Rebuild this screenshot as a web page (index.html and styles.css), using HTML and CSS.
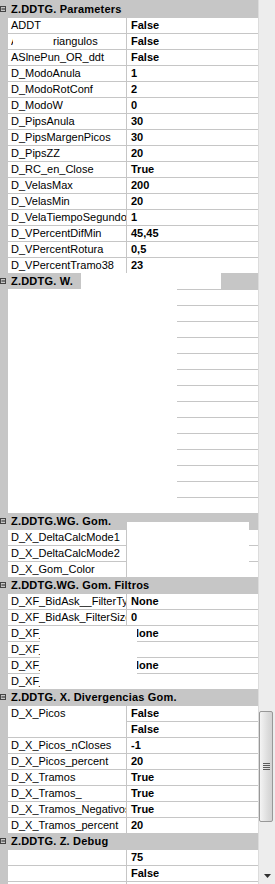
FILE: index.html
```html
<!DOCTYPE html>
<html>
<head>
<meta charset="utf-8">
<link rel="stylesheet" href="styles.css">
</head>
<body>
<div class="app">
  <div class="grid">
    <section class="sec">
      <div class="cat"><span class="tog"><svg width="8" height="16" viewBox="0 0 8 16"><rect x="0.5" y="5.5" width="5" height="5" fill="none" stroke="#444"/><line x1="1.5" y1="8" x2="5" y2="8" stroke="#222"/></svg></span><span class="ctext">Z.DDTG. Parameters</span></div>
      <div class="row"><span class="gut"></span><span class="name">ADDT</span><span class="val">False</span></div>
      <div class="row"><span class="gut"></span><span class="name"><span class="frag">A</span><span class="gap"></span>riangulos</span><span class="val">False</span></div>
      <div class="row"><span class="gut"></span><span class="name">ASlnePun_OR_ddt</span><span class="val">False</span></div>
      <div class="row"><span class="gut"></span><span class="name">D_ModoAnula</span><span class="val">1</span></div>
      <div class="row"><span class="gut"></span><span class="name">D_ModoRotConf</span><span class="val">2</span></div>
      <div class="row"><span class="gut"></span><span class="name">D_ModoW</span><span class="val">0</span></div>
      <div class="row"><span class="gut"></span><span class="name">D_PipsAnula</span><span class="val">30</span></div>
      <div class="row"><span class="gut"></span><span class="name">D_PipsMargenPicos</span><span class="val">30</span></div>
      <div class="row"><span class="gut"></span><span class="name">D_PipsZZ</span><span class="val">20</span></div>
      <div class="row"><span class="gut"></span><span class="name">D_RC_en_Close</span><span class="val">True</span></div>
      <div class="row"><span class="gut"></span><span class="name">D_VelasMax</span><span class="val">200</span></div>
      <div class="row"><span class="gut"></span><span class="name">D_VelasMin</span><span class="val">20</span></div>
      <div class="row"><span class="gut"></span><span class="name">D_VelaTiempoSegundos</span><span class="val">1</span></div>
      <div class="row"><span class="gut"></span><span class="name">D_VPercentDifMin</span><span class="val">45,45</span></div>
      <div class="row"><span class="gut"></span><span class="name">D_VPercentRotura</span><span class="val">0,5</span></div>
      <div class="row"><span class="gut"></span><span class="name">D_VPercentTramo38</span><span class="val">23</span></div>
    </section>

    <section class="sec">
      <div class="cat"><span class="tog"><svg width="8" height="16" viewBox="0 0 8 16"><rect x="0.5" y="5.5" width="5" height="5" fill="none" stroke="#444"/><line x1="1.5" y1="8" x2="5" y2="8" stroke="#222"/></svg></span><span class="ctext">Z.DDTG. W.</span></div>
      <div class="row"><span class="gut"></span><span class="name"></span><span class="val"></span></div>
      <div class="row"><span class="gut"></span><span class="name"></span><span class="val"></span></div>
      <div class="row"><span class="gut"></span><span class="name"></span><span class="val"></span></div>
      <div class="row"><span class="gut"></span><span class="name"></span><span class="val"></span></div>
      <div class="row"><span class="gut"></span><span class="name"></span><span class="val"></span></div>
      <div class="row"><span class="gut"></span><span class="name"></span><span class="val"></span></div>
      <div class="row"><span class="gut"></span><span class="name"></span><span class="val"></span></div>
      <div class="row"><span class="gut"></span><span class="name"></span><span class="val"></span></div>
      <div class="row"><span class="gut"></span><span class="name"></span><span class="val"></span></div>
      <div class="row"><span class="gut"></span><span class="name"></span><span class="val"></span></div>
      <div class="row"><span class="gut"></span><span class="name"></span><span class="val"></span></div>
      <div class="row"><span class="gut"></span><span class="name"></span><span class="val"></span></div>
      <div class="row"><span class="gut"></span><span class="name"></span><span class="val"></span></div>
      <div class="row"><span class="gut"></span><span class="name"></span><span class="val"></span></div>
      <div class="mask m-w-head"></div>
      <div class="mask m-w-body"></div>
    </section>

    <section class="sec">
      <div class="cat"><span class="tog"><svg width="8" height="16" viewBox="0 0 8 16"><rect x="0.5" y="5.5" width="5" height="5" fill="none" stroke="#444"/><line x1="1.5" y1="8" x2="5" y2="8" stroke="#222"/></svg></span><span class="ctext">Z.DDTG.WG. Gom.</span></div>
      <div class="row"><span class="gut"></span><span class="name">D_X_DeltaCalcMode1</span><span class="val"></span></div>
      <div class="row"><span class="gut"></span><span class="name">D_X_DeltaCalcMode2</span><span class="val"></span></div>
      <div class="row"><span class="gut"></span><span class="name">D_X_Gom_Color</span><span class="val"></span></div>
      <div class="mask m-gom"></div>
    </section>

    <section class="sec">
      <div class="cat"><span class="tog"><svg width="8" height="16" viewBox="0 0 8 16"><rect x="0.5" y="5.5" width="5" height="5" fill="none" stroke="#444"/><line x1="1.5" y1="8" x2="5" y2="8" stroke="#222"/></svg></span><span class="ctext">Z.DDTG.WG. Gom. Filtros</span></div>
      <div class="row"><span class="gut"></span><span class="name">D_XF_BidAsk__FilterType</span><span class="val">None</span></div>
      <div class="row"><span class="gut"></span><span class="name">D_XF_BidAsk_FilterSize</span><span class="val">0</span></div>
      <div class="row"><span class="gut"></span><span class="name">D_XF_Delta_FilterType</span><span class="val">None</span></div>
      <div class="row"><span class="gut"></span><span class="name">D_XF_Delta_FilterSize</span><span class="val"></span></div>
      <div class="row"><span class="gut"></span><span class="name">D_XF_Volume_FilterType</span><span class="val">None</span></div>
      <div class="row"><span class="gut"></span><span class="name">D_XF_Volume_FilterSize</span><span class="val"></span></div>
      <div class="mask m-filtros"></div>
    </section>

    <section class="sec">
      <div class="cat"><span class="tog"><svg width="8" height="16" viewBox="0 0 8 16"><rect x="0.5" y="5.5" width="5" height="5" fill="none" stroke="#444"/><line x1="1.5" y1="8" x2="5" y2="8" stroke="#222"/></svg></span><span class="ctext">Z.DDTG. X. Divergencias Gom.</span></div>
      <div class="row"><span class="gut"></span><span class="name">D_X_Picos</span><span class="val">False</span></div>
      <div class="row"><span class="gut"></span><span class="name"></span><span class="val">False</span></div>
      <div class="row"><span class="gut"></span><span class="name">D_X_Picos_nCloses</span><span class="val">-1</span></div>
      <div class="row"><span class="gut"></span><span class="name">D_X_Picos_percent</span><span class="val">20</span></div>
      <div class="row"><span class="gut"></span><span class="name">D_X_Tramos</span><span class="val">True</span></div>
      <div class="row"><span class="gut"></span><span class="name">D_X_Tramos_</span><span class="val">True</span></div>
      <div class="row"><span class="gut"></span><span class="name">D_X_Tramos_Negativos</span><span class="val">True</span></div>
      <div class="row"><span class="gut"></span><span class="name">D_X_Tramos_percent</span><span class="val">20</span></div>
      <div class="mask m-div"></div>
    </section>

    <section class="sec">
      <div class="cat"><span class="tog"><svg width="8" height="16" viewBox="0 0 8 16"><rect x="0.5" y="5.5" width="5" height="5" fill="none" stroke="#444"/><line x1="1.5" y1="8" x2="5" y2="8" stroke="#222"/></svg></span><span class="ctext">Z.DDTG. Z. Debug</span></div>
      <div class="row"><span class="gut"></span><span class="name"></span><span class="val">75</span></div>
      <div class="row"><span class="gut"></span><span class="name"></span><span class="val">False</span></div>
      <div class="row"><span class="gut"></span><span class="name"></span><span class="val"></span></div>
    </section>
  </div>

  <div class="scroll">
    <div class="thumb">
      <svg width="7" height="8" viewBox="0 0 7 8"><g stroke="#5a5a5a"><line x1="0" y1="0.5" x2="7" y2="0.5"/><line x1="0" y1="2.5" x2="7" y2="2.5"/><line x1="0" y1="4.5" x2="7" y2="4.5"/><line x1="0" y1="6.5" x2="7" y2="6.5"/></g></svg>
    </div>
    <div class="track"></div>
    <div class="arrow"><svg width="7" height="4" viewBox="0 0 7 4"><polygon points="0,0 7,0 3.5,4" fill="#303030"/></svg></div>
  </div>
</div>
</body>
</html>
```

FILE: styles.css
```css
html, body {
  margin: 0;
  padding: 0;
  background: #ffffff;
}

.app {
  display: flex;
  width: 275px;
  height: 884px;
  overflow: hidden;
  font-family: "Liberation Sans", Arial, sans-serif;
  font-size: 11px;
  color: #000;
}

.grid {
  width: 258px;
  flex: none;
  background: #c6c6c6;
  padding-top: 1px;
}

.sec {
  position: relative;
}

.cat {
  display: flex;
  height: 16px;
  background: #c6c6c6;
  font-weight: bold;
  line-height: 16px;
  white-space: nowrap;
  overflow: hidden;
}

.tog {
  width: 8px;
  flex: none;
  display: flex;
}

.ctext {
  padding-left: 3px;
  letter-spacing: 0.2px;
}

.row {
  display: flex;
  height: 16px;
}

.gut {
  width: 8px;
  flex: none;
  background: #c6c6c6;
}

.name,
.val {
  box-sizing: border-box;
  height: 16px;
  border-top: 1px solid #c6c6c6;
  background: #fff;
  line-height: 15px;
  white-space: nowrap;
  overflow: hidden;
}

.name {
  width: 119px;
  flex: none;
  padding-left: 3px;
  border-right: 1px solid #c6c6c6;
}

.val {
  flex: 1;
  padding-left: 4px;
  font-weight: bold;
}

.frag {
  display: inline-block;
  width: 2px;
  overflow: hidden;
  vertical-align: top;
}

.gap {
  display: inline-block;
  width: 40px;
}

.mask {
  position: absolute;
  background: #fff;
}

.m-w-head {
  left: 81px;
  top: 0;
  width: 140px;
  height: 16px;
}

.m-w-body {
  left: 8px;
  top: 16px;
  width: 169px;
  height: 224px;
}

.m-gom {
  left: 127px;
  top: 9px;
  width: 122px;
  height: 55px;
}

.m-filtros {
  left: 40px;
  top: 49px;
  width: 97px;
  height: 63px;
}

.m-div {
  left: 8px;
  top: 32px;
  width: 118px;
  height: 16px;
}

.scroll {
  width: 17px;
  flex: none;
  box-sizing: border-box;
  border-left: 1px solid #dcdcdc;
  background: #ededed;
  display: flex;
  flex-direction: column;
}

.thumb {
  margin-top: 711px;
  width: 14px;
  height: 111px;
  box-sizing: border-box;
  border: 1px solid #989898;
  border-radius: 2px;
  background: linear-gradient(to right, #f4f4f4, #dedede 60%, #d2d2d2);
  display: flex;
  align-items: center;
  justify-content: center;
}

.track {
  flex: 1;
}

.arrow {
  height: 17px;
  display: flex;
  align-items: center;
  justify-content: center;
}
```
